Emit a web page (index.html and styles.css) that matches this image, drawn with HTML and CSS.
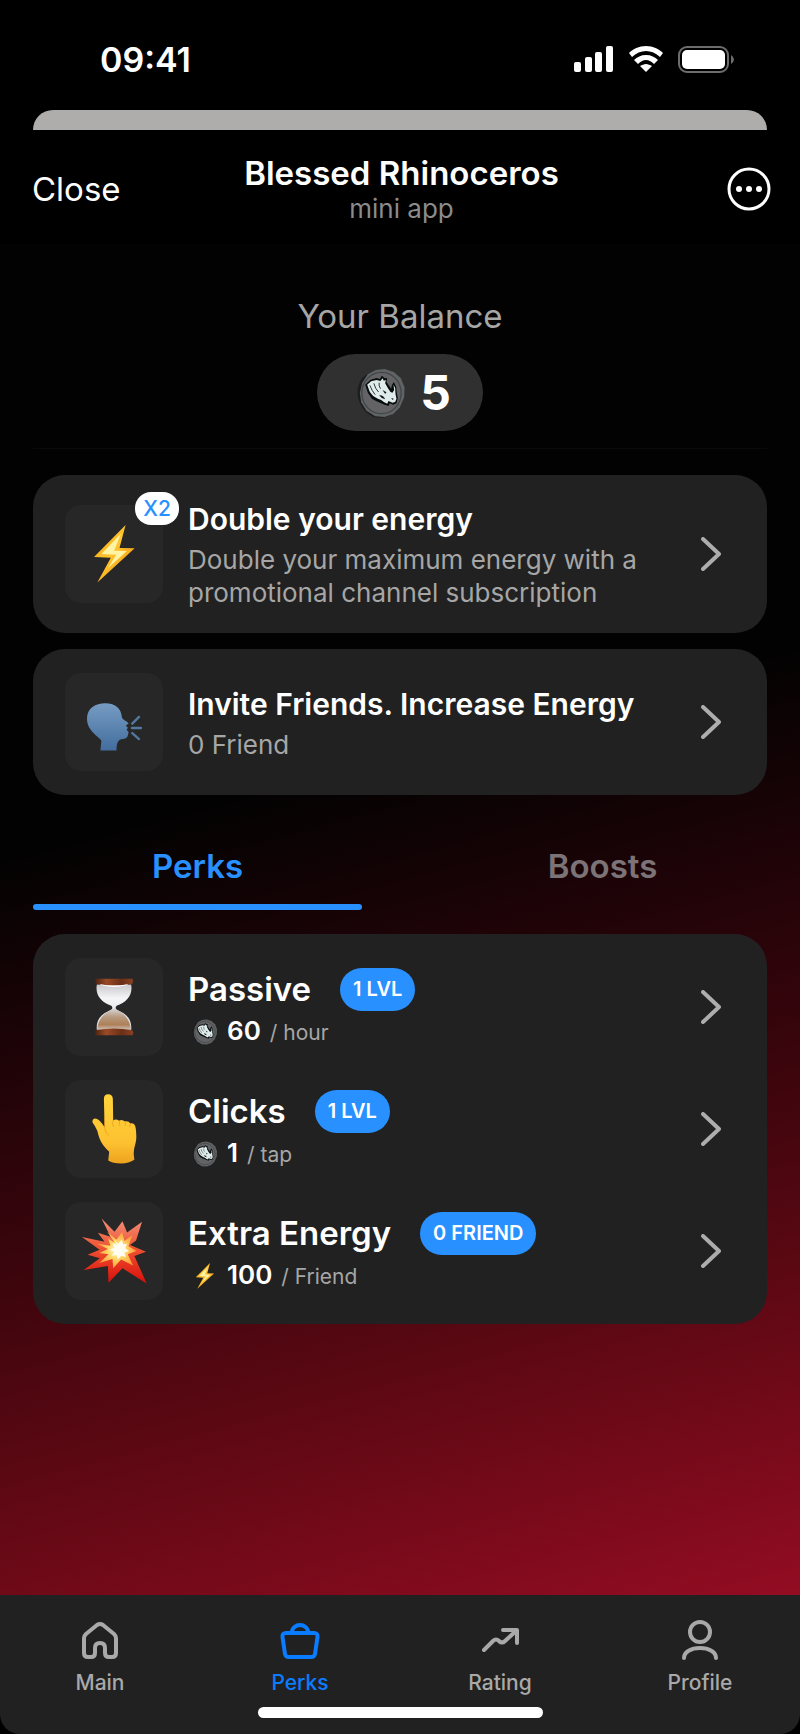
FILE: index.html
```html
<!DOCTYPE html>
<html lang="en">
<head>
    <meta charset="UTF-8">
    <meta name="viewport" content="width=device-width, initial-scale=1.0">
    <title>Blessed Rhinoceros</title>
    <link rel="stylesheet" href="styles.css">
</head>
<body>
    <svg class="sprite" aria-hidden="true">
        <defs>
            <linearGradient id="bolt-fill" x1="0" y1="0" x2="1" y2="1">
                <stop offset="0" stop-color="#f59a05"/>
                <stop offset="0.45" stop-color="#ffc52e"/>
                <stop offset="1" stop-color="#f08c08"/>
            </linearGradient>
            <linearGradient id="head-fill" x1="0" y1="0" x2="0" y2="1">
                <stop offset="0" stop-color="#769cc2"/>
                <stop offset="1" stop-color="#426d9e"/>
            </linearGradient>
            <linearGradient id="wood-fill" x1="0" y1="0" x2="1" y2="0">
                <stop offset="0" stop-color="#4b2110"/>
                <stop offset="0.3" stop-color="#9a4b26"/>
                <stop offset="0.7" stop-color="#6b2f16"/>
                <stop offset="1" stop-color="#8b4120"/>
            </linearGradient>
            <linearGradient id="glass-fill" x1="0" y1="0" x2="0" y2="1">
                <stop offset="0" stop-color="#c9c9cd"/>
                <stop offset="0.3" stop-color="#f5f5f7"/>
                <stop offset="1" stop-color="#d5d4d8"/>
            </linearGradient>
            <linearGradient id="sand-fill" x1="0" y1="0" x2="0" y2="1">
                <stop offset="0" stop-color="#d8d6da"/>
                <stop offset="0.4" stop-color="#b79a80"/>
                <stop offset="0.75" stop-color="#ad8058"/>
                <stop offset="1" stop-color="#cfc4c0"/>
            </linearGradient>
            <linearGradient id="hand-fill" x1="0" y1="0" x2="0" y2="1">
                <stop offset="0" stop-color="#ffd43b"/>
                <stop offset="0.7" stop-color="#fdc130"/>
                <stop offset="1" stop-color="#eda21e"/>
            </linearGradient>
            <linearGradient id="boom-fill" x1="0" y1="0" x2="0" y2="1">
                <stop offset="0" stop-color="#f0907a"/>
                <stop offset="0.45" stop-color="#ef5333"/>
                <stop offset="1" stop-color="#d80f0a"/>
            </linearGradient>
            <radialGradient id="boom-core">
                <stop offset="0" stop-color="#fffbe0"/>
                <stop offset="0.45" stop-color="#ffd96a"/>
                <stop offset="1" stop-color="#ff9a3c"/>
            </radialGradient>
        </defs>
        <symbol id="bolt" viewBox="0 0 122 172">
            <path d="M94 0 0 95 50 97 10 171 121 69 76 68z" fill="url(#bolt-fill)"/>
            <path d="M80 26 22 86 66 88 42 128 98 77 60 76z" fill="#fff3a6"/>
        </symbol>
        <symbol id="coin" viewBox="0 0 146 150">
            <path d="M30 18Q0 36 1 78Q8 130 52 148L80 149L100 140z" fill="#1c1d1e"/>
            <path d="M56 6 82 3 110 12 131 31 142 58 141 88 128 118 108 138 82 147 54 145 28 128 12 103 8 75 15 44 32 19z" fill="#5f6365"/>
            <ellipse cx="73" cy="75" rx="59" ry="62" fill="#636365" stroke="#424547" stroke-width="4"/>
            <path d="M24 50 40 35 58 30 68 33 74 23 82 30 90 31 88 42 96 54 102 62 104 52 110 42 117 56 119 76 122 90 118 106 108 110 98 106 94 114 82 110 72 106 58 100 44 92 32 74z" fill="#080c0d"/>
            <path d="M30 50 42 40 58 36 70 39 76 31 80 38 86 36 84 46 92 60 100 72 106 74 111 66 109 50 114 60 115 78 118 92 114 102 106 104 94 99 90 107 80 102 72 96 62 92 48 84 38 72z" fill="#dfeceb"/>
            <path d="M38 52Q44 68 54 80M50 46Q54 62 64 72M66 44Q64 54 70 62" fill="none" stroke="#2b3636" stroke-width="3"/>
            <path d="M76 66 88 73 84 78zM102 90 110 92 106 96zM66 82Q78 80 84 94Q72 92 66 82z" fill="#121a1a"/>
        </symbol>
        <symbol id="chevron" viewBox="0 0 20 34">
            <path d="M2 2 18 17 2 32" fill="none" stroke="currentColor" stroke-width="4" stroke-linecap="round" stroke-linejoin="round"/>
        </symbol>
    </svg>

    <div class="status-bar">
        <span class="clock">09:41</span>
        <div class="status-icons">
            <svg width="41" height="26" viewBox="0 0 41 26" fill="#fff">
                <rect x="1" y="16" width="7" height="10" rx="2"/>
                <rect x="12" y="11" width="7" height="15" rx="2"/>
                <rect x="22" y="6" width="7" height="20" rx="2"/>
                <rect x="33" y="0" width="7" height="26" rx="2"/>
            </svg>
            <svg width="36" height="26" viewBox="0 0 36 26" fill="#fff">
                <path d="M18 0C11 0 5 3 1 7L4 11C8 7 13 5 18 5S28 7 32 11L35 7C31 3 25 0 18 0z"/>
                <path d="M18 9C13 9 9 11 6 14L10 18C12 16 15 14 18 14S24 16 26 18L30 14C27 11 23 9 18 9z"/>
                <path d="M18 18C16 18 14 19 12 20L18 26L24 20C22 19 20 18 18 18z"/>
            </svg>
            <svg width="57" height="27" viewBox="0 0 57 27">
                <rect x="1" y="1" width="49" height="25" rx="8" fill="none" stroke="#6d6d6d" stroke-width="2"/>
                <rect x="4" y="4" width="43" height="19" rx="5" fill="#fff"/>
                <path d="M53 9Q56 11 56 13.500Q56 16 53 18z" fill="#6d6d6d"/>
            </svg>
        </div>
    </div>
    <div class="sheet-edge"></div>

    <header class="app-header">
        <button class="close-btn" type="button">Close</button>
        <div class="app-name">
            <h1 class="app-title">Blessed Rhinoceros</h1>
            <div class="app-subtitle">mini app</div>
        </div>
        <button class="more-btn" type="button" aria-label="More">
            <svg width="44" height="44" viewBox="0 0 44 44">
                <circle cx="22" cy="22" r="20" fill="none" stroke="#fff" stroke-width="3"/>
                <circle cx="12" cy="22" r="3" fill="#fff"/>
                <circle cx="22" cy="22" r="3" fill="#fff"/>
                <circle cx="32" cy="22" r="3" fill="#fff"/>
            </svg>
        </button>
    </header>

    <main class="content">
        <section class="balance">
            <div class="balance-label">Your Balance</div>
            <div class="balance-pill">
                <svg class="coin-large"><use href="#coin"/></svg>
                <span>5</span>
            </div>
        </section>

        <div class="offers">
            <a class="card row" href="#energy">
                <span class="tile">
                    <svg class="tile-bolt"><use href="#bolt"/></svg>
                    <span class="multiplier">X2</span>
                </span>
                <span class="row-text">
                    <span class="row-title">Double your energy</span>
                    <span class="row-desc">Double your maximum energy with a promotional channel subscription</span>
                </span>
                <svg class="chevron"><use href="#chevron"/></svg>
            </a>
            <a class="card row" href="#invite">
                <span class="tile">
                    <svg class="tile-head" viewBox="0 0 164 142">
                        <path d="M40 141 43 112C34 98 0 84 0 46C0 14 26 0 54 0C86 0 103 18 104 42C104 48 122 56 124 60C124 64 116 64 116 67L122 73 118 79 124 86C122 98 120 106 108 107C94 107 88 116 88 141z" fill="url(#head-fill)"/>
                        <path d="M135 61 155 41M134 74H161M135 89 155 107" stroke="#5278a0" stroke-width="7" stroke-linecap="round"/>
                    </svg>
                </span>
                <span class="row-text">
                    <span class="row-title">Invite Friends. Increase Energy</span>
                    <span class="row-desc">0 Friend</span>
                </span>
                <svg class="chevron"><use href="#chevron"/></svg>
            </a>
        </div>

        <div class="tabs" role="tablist">
            <button class="tab active" type="button" role="tab" aria-selected="true">Perks</button>
            <button class="tab" type="button" role="tab" aria-selected="false">Boosts</button>
        </div>

        <div class="card perks">
            <a class="row" href="#passive">
                <span class="tile">
                    <svg class="tile-hourglass" viewBox="0 0 120 176">
                        <path d="M8 20H112C118 52 98 74 68 84Q62 90 68 96C98 108 116 126 112 158H8C4 126 22 108 52 96Q58 90 52 84C22 74 2 52 8 20z" fill="url(#glass-fill)"/>
                        <path d="M60 92C84 104 108 118 111 158H9C12 118 36 104 60 92z" fill="url(#sand-fill)"/>
                        <path d="M4 2H116Q120 12 114 18Q60 28 6 18Q0 12 4 2z" fill="url(#wood-fill)"/>
                        <path d="M6 158Q60 148 114 158Q122 164 116 174H4Q-2 164 6 158z" fill="url(#wood-fill)"/>
                        <path d="M16 18Q60 28 104 18L98 22Q60 32 22 22z" fill="#fff"/>
                    </svg>
                </span>
                <span class="row-text">
                    <span class="perk-head"><span class="perk-name">Passive</span><span class="level">1 LVL</span></span>
                    <span class="perk-rate"><svg class="coin-small"><use href="#coin"/></svg><b>60</b><span>/ hour</span></span>
                </span>
                <svg class="chevron"><use href="#chevron"/></svg>
            </a>
            <a class="row" href="#clicks">
                <span class="tile">
                    <svg class="tile-hand" viewBox="0 0 136 210">
                        <path d="M36 14Q36 0 49 0Q62 0 63 14L64 79Q72 73 82 80Q90 74 100 82Q110 80 116 88Q130 86 132 102Q136 130 132 146Q126 166 126 180L128 198Q112 209 88 209Q62 209 49 200L52 174Q42 164 34 154Q22 138 16 110Q10 96 2 86Q-1 76 8 73Q22 72 38 100z" fill="url(#hand-fill)"/>
                        <path d="M38 70V100Q39 116 50 124M64 79Q58 88 65 98M82 80 84 94M100 82 101 94M116 88 114 98" fill="none" stroke="#e39a1b" stroke-width="2" stroke-linecap="round"/>
                    </svg>
                </span>
                <span class="row-text">
                    <span class="perk-head"><span class="perk-name">Clicks</span><span class="level">1 LVL</span></span>
                    <span class="perk-rate"><svg class="coin-small"><use href="#coin"/></svg><b>1</b><span>/ tap</span></span>
                </span>
                <svg class="chevron"><use href="#chevron"/></svg>
            </a>
            <a class="row" href="#extra">
                <span class="tile">
                    <svg class="tile-boom" viewBox="0 0 196 196">
                        <path d="M59 0 98 40 122 8 136 42 181 10 163 66 145 80 193 100 158 113 195 196 122 150 80 194 78 143 5 155 54 120 17 109 53 94 0 56 68 70 48 43 86 55z" fill="url(#boom-fill)"/>
                        <path d="M76 40 104 64 121 40 128 68 152 50 140 84 164 98 138 108 154 142 118 124 94 150 92 122 52 134 80 108 52 104 78 92 46 76 86 82 78 60 98 72z" fill="url(#boom-core)"/>
                        <path d="M98 64 108 76 120 64 124 78 136 76 130 90 142 98 128 103 132 116 118 112 108 124 104 110 90 112 98 100 84 94 98 88 92 74 106 80z" fill="#fffdf0"/>
                    </svg>
                </span>
                <span class="row-text">
                    <span class="perk-head"><span class="perk-name">Extra Energy</span><span class="level">0 FRIEND</span></span>
                    <span class="perk-rate"><svg class="bolt-small"><use href="#bolt"/></svg><b>100</b><span>/ Friend</span></span>
                </span>
                <svg class="chevron"><use href="#chevron"/></svg>
            </a>
        </div>
    </main>

    <footer class="bottom-bar">
        <nav class="nav">
            <a class="nav-item" href="#main">
                <svg class="nav-icon" viewBox="0 0 44 44">
                    <path d="M6 19Q6 17 8 15L19 6Q22 4 25 6L36 15Q38 17 38 19V34Q38 38 34 38H31Q27 38 27 34V29Q27 24 22 24T17 29V34Q17 38 13 38H10Q6 38 6 34z"/>
                </svg>
                Main
            </a>
            <a class="nav-item active" href="#perks">
                <svg class="nav-icon" viewBox="0 0 44 44">
                    <path d="M8 14H36Q40 14 39.500 18L37 35Q36.500 38 33 38H11Q7.500 38 7 35L4.500 18Q4 14 8 14zM14 13C14 9 18 6 22 6S30 9 30 13"/>
                </svg>
                Perks
            </a>
            <a class="nav-item" href="#rating">
                <svg class="nav-icon" viewBox="0 0 44 44">
                    <path d="M6 31 15 22Q18 19 21 22T27 22L38 12M25 11H39V24"/>
                </svg>
                Rating
            </a>
            <a class="nav-item" href="#profile">
                <svg class="nav-icon" viewBox="0 0 44 44">
                    <circle cx="22" cy="13" r="10"/>
                    <path d="M6 39C6 33 13 29 22 29S38 33 38 39"/>
                </svg>
                Profile
            </a>
        </nav>
        <div class="home-indicator"></div>
    </footer>
</body>
</html>
```
FILE: styles.css
```css
* {
    box-sizing: border-box;
}
body {
    margin: 0;
    min-height: 100vh;
    display: flex;
    flex-direction: column;
    background-color: #000;
    color: #fff;
    font-family: Inter, "Liberation Sans", sans-serif;
}
svg {
    display: block;
    flex-shrink: 0;
}
a {
    color: inherit;
    text-decoration: none;
}
button {
    padding: 0;
    border: none;
    background: none;
    color: inherit;
    font-family: inherit;
    cursor: pointer;
}
.sprite {
    position: absolute;
    width: 0;
    height: 0;
}

/* status bar */
.status-bar {
    display: flex;
    justify-content: space-between;
    align-items: center;
    height: 110px;
    padding: 8px 65px 0 100px;
}
.clock {
    font-size: 34px;
    font-weight: 600;
}
.status-icons {
    display: flex;
    align-items: center;
    gap: 14px;
}
.sheet-edge {
    height: 20px;
    margin: 0 33px;
    border-radius: 20px 20px 0 0;
    background-color: #aeadab;
}

/* header */
.app-header {
    display: grid;
    grid-template-columns: 1fr auto 1fr;
    align-items: center;
    height: 114px;
    padding: 3px 29px 0 32px;
}
.close-btn {
    justify-self: start;
    font-size: 33px;
}
.more-btn {
    justify-self: end;
}
.app-name {
    text-align: center;
}
.app-title {
    margin: 0;
    font-size: 33px;
    font-weight: 600;
    line-height: 40px;
}
.app-subtitle {
    color: #8b8b8b;
    font-size: 26px;
    line-height: 32px;
}

/* page */
.content {
    flex: 1;
    padding: 48px 33px 48px;
    background: linear-gradient(165deg, #020202 0%, #020202 39%, #3e050d 67%, #590812 78%, #930c22 100%);
}
.balance {
    display: flex;
    flex-direction: column;
    align-items: center;
    gap: 14px;
    padding-bottom: 17px;
    border-bottom: 1px solid #0a0a0a;
}
.balance-label {
    color: #a6a6a6;
    font-size: 33px;
    line-height: 48px;
}
.balance-pill {
    display: flex;
    align-items: center;
    gap: 14px;
    height: 77px;
    padding: 0 32px 0 40px;
    border-radius: 39px;
    background-color: #303030;
    font-size: 48px;
    font-weight: 700;
}
.coin-large {
    width: 49px;
    height: 50px;
}
.offers {
    display: grid;
    gap: 16px;
    margin-top: 26px;
}
.card {
    padding: 24px 32px;
    border-radius: 32px;
    background-color: #212121;
}
.row {
    display: flex;
    align-items: center;
    gap: 25px;
}
.tile {
    position: relative;
    display: flex;
    align-items: center;
    justify-content: center;
    width: 98px;
    height: 98px;
    flex-shrink: 0;
    border-radius: 16px;
    background-color: #272727;
}
.multiplier {
    position: absolute;
    top: -13px;
    right: -16px;
    width: 44px;
    border-radius: 16px;
    background-color: #fff;
    color: #2990ff;
    font-size: 21px;
    font-weight: 500;
    line-height: 33px;
    text-align: center;
}
.tile-bolt {
    width: 41px;
    height: 58px;
}
.tile-head {
    width: 55px;
    height: 48px;
    margin-top: 10px;
}
.tile-hourglass {
    width: 40px;
    height: 58px;
}
.tile-hand {
    width: 45px;
    height: 70px;
}
.tile-boom {
    width: 65px;
    height: 66px;
}
.row-text {
    flex: 1;
    display: flex;
    flex-direction: column;
}
.row-title {
    padding-bottom: 4px;
    font-size: 30px;
    font-weight: 600;
    line-height: 40px;
}
.row-desc {
    color: #a6a6a6;
    font-size: 26px;
    line-height: 33px;
}
.chevron {
    width: 20px;
    height: 34px;
    margin-right: 14px;
    color: #adadad;
}

/* tabs */
.tabs {
    display: grid;
    grid-template-columns: 1fr 1fr;
    gap: 76px;
    margin-top: 38px;
}
.tab {
    position: relative;
    height: 77px;
    padding-bottom: 12px;
    color: #7c7377;
    font-size: 33px;
    font-weight: 600;
}
.tab.active {
    color: #2990ff;
}
.tab.active::after {
    content: "";
    position: absolute;
    left: 0;
    right: 0;
    bottom: 0;
    height: 6px;
    border-radius: 3px;
    background-color: #2990ff;
}

/* perks */
.perks {
    display: grid;
    gap: 24px;
    margin-top: 24px;
}
.perks .row-text {
    padding-top: 6px;
}
.perk-head {
    display: flex;
    align-items: center;
    gap: 29px;
}
.perk-name {
    font-size: 33px;
    font-weight: 600;
}
.level {
    padding: 0 13px;
    border-radius: 22px;
    background-color: #2990ff;
    font-size: 20px;
    font-weight: 600;
    line-height: 43px;
}
.perk-rate {
    display: flex;
    align-items: baseline;
    gap: 9px;
    padding-left: 4px;
    line-height: 40px;
}
.perk-rate b {
    font-size: 26px;
    font-weight: 600;
}
.perk-rate span {
    color: #a6a6a6;
    font-size: 21px;
}
.coin-small,
.bolt-small {
    width: 26px;
    height: 26px;
    align-self: center;
}

/* bottom bar */
.bottom-bar {
    padding: 24px 0 16px;
    border-radius: 0 0 20px 20px;
    background-color: #212121;
}
.nav {
    display: grid;
    grid-template-columns: repeat(4, 1fr);
}
.nav-item {
    display: flex;
    flex-direction: column;
    align-items: center;
    gap: 6px;
    color: #a9a9a9;
    font-size: 21px;
    font-weight: 500;
    line-height: 28px;
}
.nav-item.active {
    color: #0a7cff;
}
.nav-icon {
    width: 44px;
    height: 44px;
    fill: none;
    stroke: currentColor;
    stroke-width: 4;
    stroke-linecap: round;
    stroke-linejoin: round;
}
.home-indicator {
    width: 285px;
    height: 11px;
    margin: 10px auto 0;
    border-radius: 6px;
    background-color: #fff;
}
```
